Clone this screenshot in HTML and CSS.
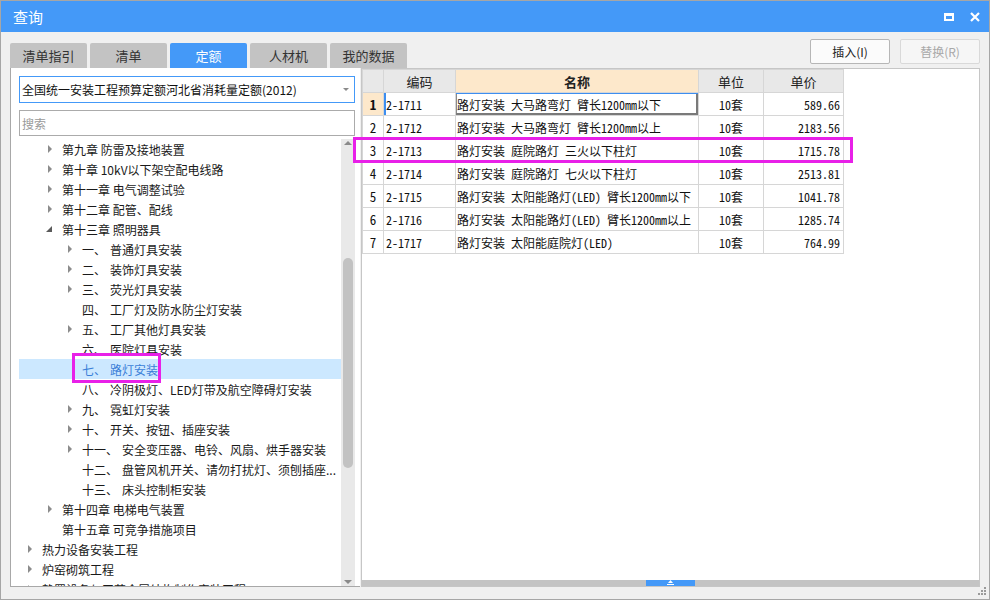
FILE: index.html
```html
<!DOCTYPE html>
<html lang="zh-CN">
<head>
<meta charset="utf-8">
<title>查询</title>
<link rel="stylesheet" href="styles.css">
</head>
<body>
<div class="window">
  <div class="titlebar">
    <span class="title">查询</span>
    <div class="win-ctrls">
      <svg width="10" height="8" viewBox="0 0 10 8"><path d="M0 0H10V8H0Z M2 3V6H8V3Z" fill="#fff" fill-rule="evenodd"/></svg>
      <svg width="10" height="10" viewBox="0 0 10 10"><path d="M1 1L9 9M9 1L1 9" stroke="#fff" stroke-width="2.2"/></svg>
    </div>
  </div>

  <div class="toolbar">
    <div class="tabs">
      <div class="tab">清单指引</div>
      <div class="tab">清单</div>
      <div class="tab active">定额</div>
      <div class="tab">人材机</div>
      <div class="tab">我的数据</div>
    </div>
    <div class="actions">
      <button class="btn">插入(I)</button>
      <button class="btn disabled">替换(R)</button>
    </div>
  </div>

  <div class="panels">
    <div class="left">
      <div class="select">
        <span>全国统一安装工程预算定额河北省消耗量定额(2012)</span>
        <span class="select-arrow"></span>
      </div>
      <div class="search">搜索</div>
      <div class="tree">
        <div class="tree-list">
          <div class="row l2"><span class="caret closed"></span>第九章 防雷及接地装置</div>
          <div class="row l2"><span class="caret closed"></span>第十章 10kV以下架空配电线路</div>
          <div class="row l2"><span class="caret closed"></span>第十一章 电气调整试验</div>
          <div class="row l2"><span class="caret closed"></span>第十二章 配管、配线</div>
          <div class="row l2"><span class="caret open"></span>第十三章 照明器具</div>
          <div class="row l3"><span class="caret closed"></span><span class="num">一、</span>普通灯具安装</div>
          <div class="row l3"><span class="caret closed"></span><span class="num">二、</span>装饰灯具安装</div>
          <div class="row l3"><span class="caret closed"></span><span class="num">三、</span>荧光灯具安装</div>
          <div class="row l3"><span class="caret"></span><span class="num">四、</span>工厂灯及防水防尘灯安装</div>
          <div class="row l3"><span class="caret closed"></span><span class="num">五、</span>工厂其他灯具安装</div>
          <div class="row l3"><span class="caret"></span><span class="num">六、</span>医院灯具安装</div>
          <div class="row l3 selected"><span class="caret"></span><span class="num">七、</span>路灯安装</div>
          <div class="row l3"><span class="caret"></span><span class="num">八、</span>冷阴极灯、LED灯带及航空障碍灯安装</div>
          <div class="row l3"><span class="caret closed"></span><span class="num">九、</span>霓虹灯安装</div>
          <div class="row l3"><span class="caret closed"></span><span class="num">十、</span>开关、按钮、插座安装</div>
          <div class="row l3"><span class="caret closed"></span><span class="num">十一、</span>安全变压器、电铃、风扇、烘手器安装</div>
          <div class="row l3"><span class="caret"></span><span class="num">十二、</span>盘管风机开关、请勿打扰灯、须刨插座...</div>
          <div class="row l3"><span class="caret"></span><span class="num">十三、</span>床头控制柜安装</div>
          <div class="row l2"><span class="caret closed"></span>第十四章 电梯电气装置</div>
          <div class="row l2"><span class="caret"></span>第十五章 可竞争措施项目</div>
          <div class="row l1"><span class="caret closed"></span>热力设备安装工程</div>
          <div class="row l1"><span class="caret closed"></span>炉窑砌筑工程</div>
          <div class="row l1"><span class="caret closed"></span>静置设备与工艺金属结构制作安装工程</div>
        </div>
        <div class="scrollbar">
          <div class="sb-up"><span></span></div>
          <div class="sb-track"><div class="sb-thumb"></div></div>
          <div class="sb-down"><span></span></div>
        </div>
      </div>
    </div>

    <div class="right">
      <div class="grid-wrap">
        <table class="grid">
          <colgroup>
            <col class="c-no"><col class="c-code"><col class="c-name"><col class="c-unit"><col class="c-price">
          </colgroup>
          <thead>
            <tr><th></th><th>编码</th><th class="h-name">名称</th><th>单位</th><th>单价</th></tr>
          </thead>
          <tbody>
            <tr class="cur"><td class="no">1</td><td class="code">2-1711</td><td class="name">路灯安装 大马路弯灯 臂长1200mm以下</td><td class="unit">10套</td><td class="price">589.66</td></tr>
            <tr><td class="no">2</td><td class="code">2-1712</td><td class="name">路灯安装 大马路弯灯 臂长1200mm以上</td><td class="unit">10套</td><td class="price">2183.56</td></tr>
            <tr><td class="no">3</td><td class="code">2-1713</td><td class="name">路灯安装 庭院路灯 三火以下柱灯</td><td class="unit">10套</td><td class="price">1715.78</td></tr>
            <tr><td class="no">4</td><td class="code">2-1714</td><td class="name">路灯安装 庭院路灯 七火以下柱灯</td><td class="unit">10套</td><td class="price">2513.81</td></tr>
            <tr><td class="no">5</td><td class="code">2-1715</td><td class="name">路灯安装 太阳能路灯(LED) 臂长1200mm以下</td><td class="unit">10套</td><td class="price">1041.78</td></tr>
            <tr><td class="no">6</td><td class="code">2-1716</td><td class="name">路灯安装 太阳能路灯(LED) 臂长1200mm以上</td><td class="unit">10套</td><td class="price">1285.74</td></tr>
            <tr><td class="no">7</td><td class="code">2-1717</td><td class="name">路灯安装 太阳能庭院灯(LED)</td><td class="unit">10套</td><td class="price">764.99</td></tr>
          </tbody>
        </table>
      </div>
      <div class="splitter">
        <div class="split-thumb">
          <svg width="7" height="5" viewBox="0 0 7 5"><path d="M3.5 0L6 3H1Z" fill="#fff"/><rect x="0" y="4" width="7" height="1" fill="#fff"/></svg>
        </div>
      </div>
    </div>
  </div>

  <div class="footer">
    <svg width="8" height="8" viewBox="0 0 8 8" fill="#9a9a9a"><rect x="6" y="0" width="2" height="2"/><rect x="3" y="3" width="2" height="2"/><rect x="6" y="3" width="2" height="2"/><rect x="0" y="6" width="2" height="2"/><rect x="3" y="6" width="2" height="2"/><rect x="6" y="6" width="2" height="2"/></svg>
  </div>

  <div class="mark mark-tree"></div>
  <div class="mark mark-row"></div>
</div>
</body>
</html>
```
FILE: styles.css
```css
* { box-sizing: border-box; }
html, body { margin: 0; padding: 0; }
body {
  width: 990px;
  height: 600px;
  overflow: hidden;
  font-family: "Noto Sans CJK SC", "Liberation Sans", sans-serif;
  font-size: 12px;
  color: #1a1a1a;
  background: #fff;
}

.window {
  position: relative;
  width: 990px;
  height: 600px;
  border: 1px solid #a6a6a6;
  background: #f0f0f0;
  display: flex;
  flex-direction: column;
}

/* title bar */
.titlebar {
  flex: none;
  height: 31px;
  background: #4499f8;
  color: #fff;
  display: flex;
  align-items: center;
  justify-content: space-between;
  padding: 0 9px 0 12px;
}
.title { font-size: 15px; }
.win-ctrls { display: flex; align-items: center; gap: 16px; }
.win-ctrls svg { display: block; }

/* toolbar */
.toolbar {
  flex: none;
  height: 36px;
  display: flex;
  justify-content: space-between;
  padding: 0 9px;
}
.tabs { align-self: flex-end; display: flex; gap: 3px; }
.tab {
  width: 77px;
  height: 25px;
  background: #c3c3c3;
  color: #333;
  font-size: 13px;
  border-radius: 2px 2px 0 0;
  display: flex;
  align-items: center;
  justify-content: center;
}
.tab.active { background: #4499f8; color: #fff; }

.actions { display: flex; gap: 10px; padding-top: 7px; }
.btn {
  width: 80px;
  height: 25px;
  border: 1px solid #b6b6b6;
  border-radius: 2px;
  background: #fbfbfb;
  color: #222;
  font-family: inherit;
  font-size: 12px;
  padding: 0;
}
.btn.disabled { border-color: #d9d9d9; color: #a8a8a8; background: #f6f6f6; }

/* panels */
.panels {
  flex: none;
  height: 519px;
  margin: 0 9px;
  display: flex;
}
.left {
  width: 350px;
  background: #fff;
  border-left: 1px solid #a8a8a8;
  border-bottom: 1px solid #a8a8a8;
  padding: 8px 5px 0 8px;
  display: flex;
  flex-direction: column;
}
.select {
  flex: none;
  height: 27px;
  border: 1px solid #4499f8;
  display: flex;
  align-items: center;
  justify-content: space-between;
  padding: 0 5px 0 2px;
  color: #111;
}
.select-arrow {
  width: 0; height: 0;
  border-left: 3px solid transparent;
  border-right: 3px solid transparent;
  border-top: 3px solid #8a8a8a;
}
.search {
  flex: none;
  height: 26px;
  margin-top: 7px;
  border: 1px solid #ababab;
  color: #9a9a9a;
  display: flex;
  align-items: center;
  padding-left: 2px;
}

.tree {
  flex: 1;
  margin-top: 3px;
  display: flex;
  overflow: hidden;
  min-height: 0;
}
.tree-list { flex: 1; overflow: hidden; }
.row {
  height: 20px;
  display: flex;
  align-items: center;
  white-space: nowrap;
  color: #1a1a1a;
}
.row.l1 { padding-left: 6px; }
.row.l2 { padding-left: 26px; }
.row.l3 { padding-left: 46px; }
.row.selected { background: #cce8ff; color: #3b7fd8; }
.caret { width: 17px; flex: none; display: flex; align-items: center; }
.caret.closed::before {
  content: "";
  margin-left: 3px;
  border-left: 4px solid #8c8c8c;
  border-top: 4px solid transparent;
  border-bottom: 4px solid transparent;
}
.caret.open::before {
  content: "";
  margin-left: 1px;
  border-bottom: 6px solid #5a5a5a;
  border-left: 6px solid transparent;
}
.num { margin-right: 4px; }

.scrollbar {
  flex: none;
  width: 14px;
  background: #e9e9e9;
  display: flex;
  flex-direction: column;
}
.sb-up, .sb-down { height: 12px; flex: none; display: flex; justify-content: center; }
.sb-up { padding-top: 2px; }
.sb-down { padding-top: 6px; }
.sb-up span {
  width: 0; height: 0;
  border-left: 4px solid transparent;
  border-right: 4px solid transparent;
  border-bottom: 4px solid #8a8a8a;
}
.sb-down span {
  width: 0; height: 0;
  border-left: 4px solid transparent;
  border-right: 4px solid transparent;
  border-top: 4px solid #8a8a8a;
}
.sb-track { flex: 1; }
.sb-thumb {
  margin: 107px 0 0 2px;
  width: 10px;
  height: 210px;
  border-radius: 5px;
  background: #c2c2c2;
}

.right {
  flex: 1;
  margin-left: 1px;
  background: #fff;
  border: 1px solid #c6c6c6;
  display: flex;
  flex-direction: column;
}
.grid-wrap { flex: 1; overflow: hidden; }
.grid {
  border-collapse: collapse;
  table-layout: fixed;
  width: 481px;
  font-family: "Noto Sans Mono CJK SC", "Liberation Mono", "Noto Sans CJK SC", monospace;
  font-size: 12px;
  color: #111;
}
.c-no { width: 21px; }
.c-code { width: 72px; }
.c-name { width: 243px; }
.c-unit { width: 65px; }
.c-price { width: 80px; }
.grid th, .grid td {
  height: 23px;
  border: 1px solid #d6d6d6;
  padding: 0;
  white-space: nowrap;
  overflow: hidden;
}
.grid th {
  background: #e8e8e8;
  font-family: "Noto Sans CJK SC", sans-serif;
  font-size: 13px;
  font-weight: normal;
  color: #222;
}
.grid th.h-name { background: #fde8cb; font-weight: bold; }
.grid td.no { text-align: center; font-size: 13px; }
.grid td.code { padding-left: 2px; }
.grid td.name { padding-left: 1px; }
.grid td.unit { text-align: center; }
.grid td.price { text-align: right; padding-right: 3px; }
.grid tr.cur td.no { background: #fde8cb; font-weight: bold; }
.grid tr.cur td.code { box-shadow: inset 2px 0 0 #3d8ef0; }
.grid tr.cur td.name { box-shadow: inset 0 1px 0 #3d8ef0, inset -2px -2px 0 #7a7a7a, inset 1px 0 0 #8a8a8a; }

.splitter {
  flex: none;
  height: 6px;
  background: #c4c4c4;
  display: flex;
  justify-content: center;
}
.split-thumb {
  width: 49px;
  background: #4499f8;
  display: flex;
  align-items: flex-start;
  justify-content: center;
}
.split-thumb svg { display: block; }

.footer {
  flex: 1;
  display: flex;
  justify-content: flex-end;
  padding-right: 3px;
}
.footer svg { display: block; }

/* annotation boxes */
.mark { position: absolute; border: 3px solid #e820e8; }
.mark-tree { left: 71px; top: 352px; width: 89px; height: 30px; }
.mark-row { left: 352px; top: 136px; width: 500px; height: 26px; }
```
